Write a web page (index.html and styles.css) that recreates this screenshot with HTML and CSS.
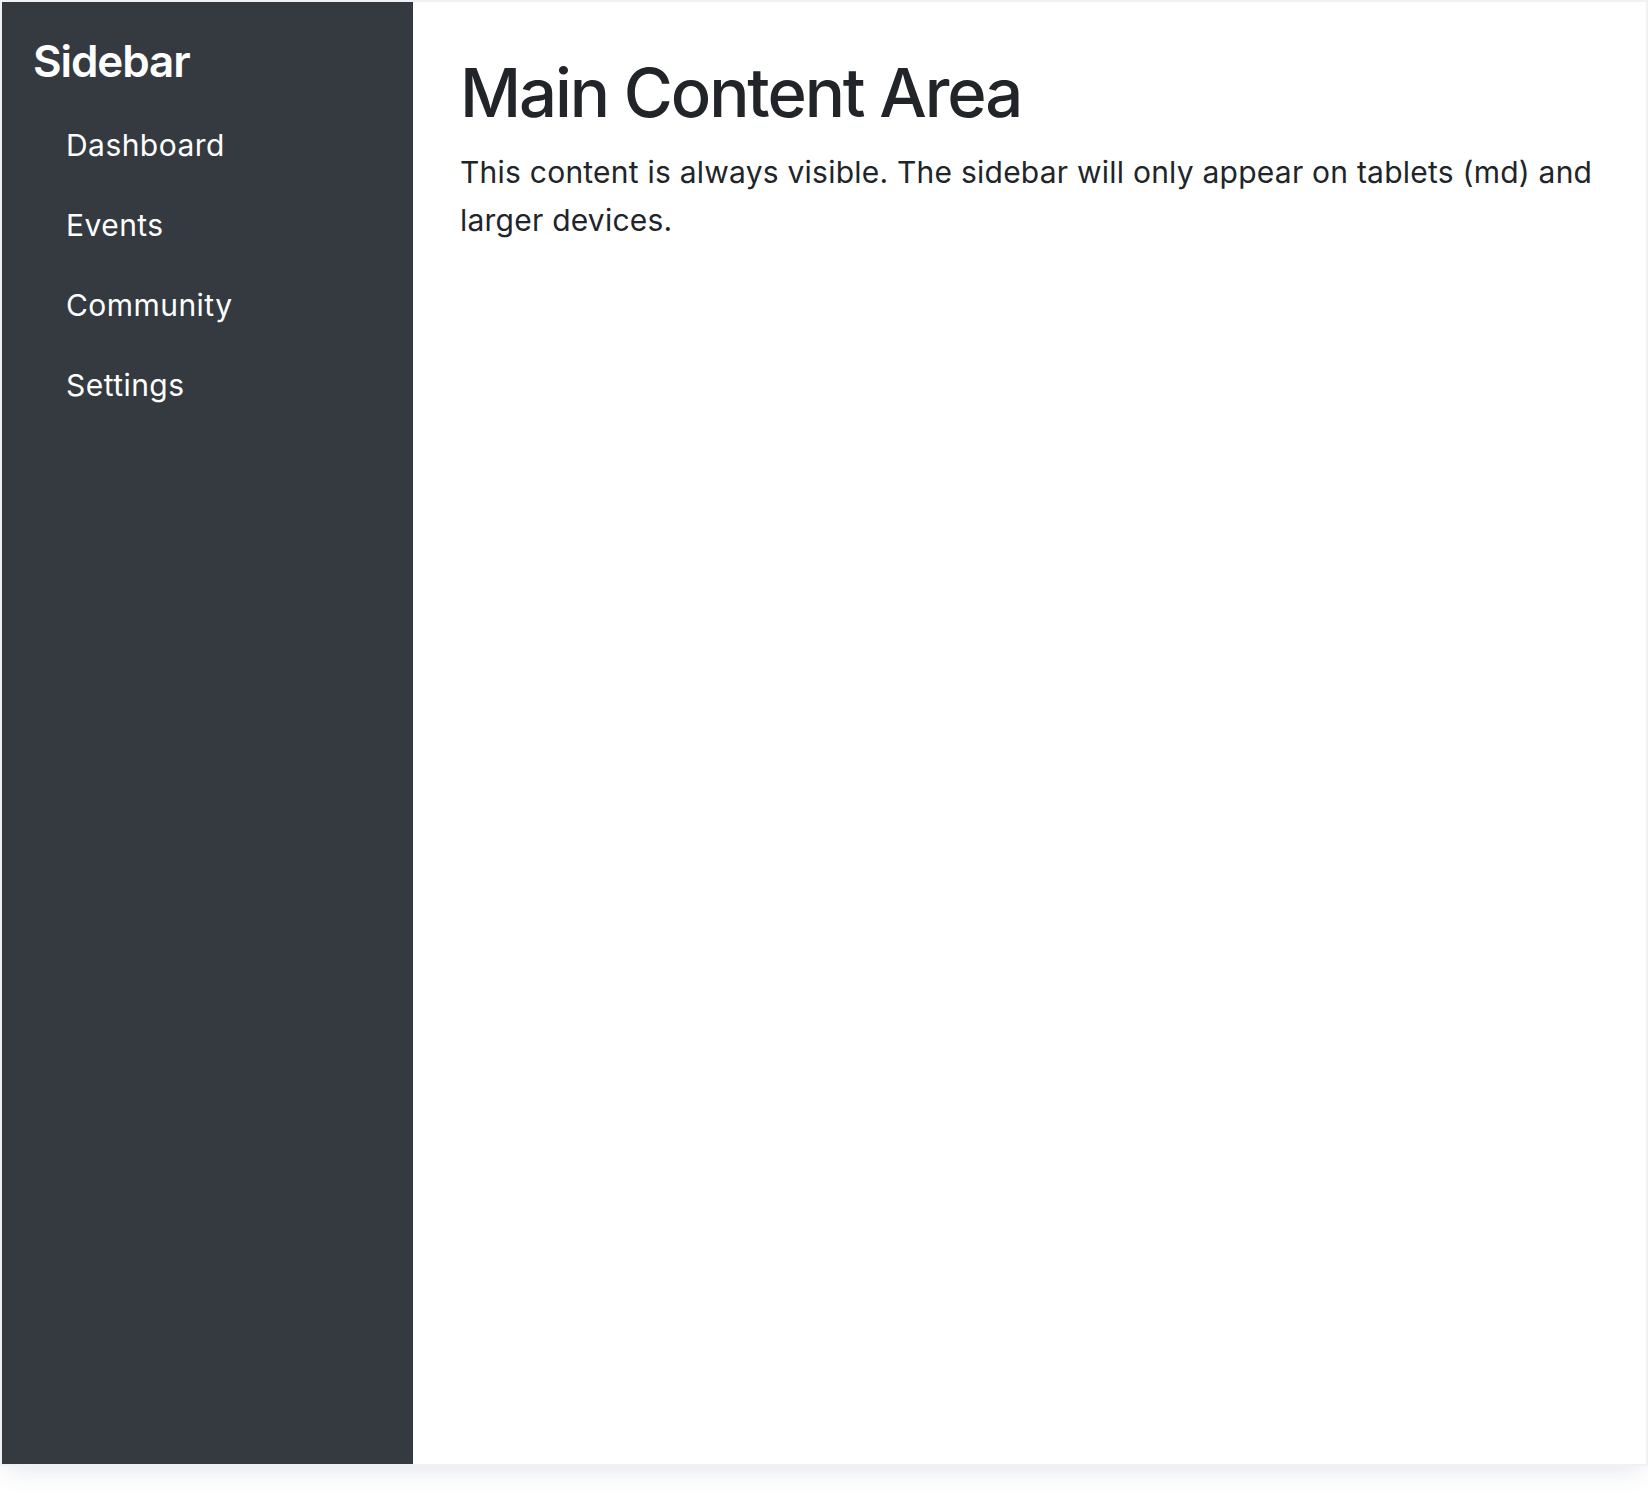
FILE: index.html
```html
<!DOCTYPE html>
<html lang="en">
<head>
<meta charset="utf-8">
<title>Sidebar Layout</title>
<link rel="stylesheet" href="styles.css">
</head>
<body>
<div class="frame">
  <aside class="sidebar">
    <h4 class="sidebar-title">Sidebar</h4>
    <nav class="nav">
      <a class="nav-link" href="#">Dashboard</a>
      <a class="nav-link" href="#">Events</a>
      <a class="nav-link" href="#">Community</a>
      <a class="nav-link" href="#">Settings</a>
    </nav>
  </aside>
  <main class="main">
    <h1 class="main-title">Main Content Area</h1>
    <p class="main-text">This content is always visible. The sidebar will only appear on tablets (md) and larger devices.</p>
  </main>
</div>
</body>
</html>
```
FILE: styles.css
```css
html, body {
  margin: 0;
  padding: 0;
}
body {
  background: #ffffff;
  min-height: 1496px;
  font-family: Inter, "Noto Sans", "Liberation Sans", sans-serif;
  color: #212529;
}
.frame {
  display: flex;
  margin: 2px 2px 0 2px;
  height: 1462px;
  background: #ffffff;
  box-shadow: 0 0 0 2px #f1f1f3, 0 12px 22px -4px rgba(60, 70, 130, 0.12);
}
.sidebar {
  width: 25%;
  flex: none;
  background: #343a40;
  padding: 33px 0 0 31px;
  box-sizing: border-box;
}
.sidebar-title {
  margin: 0 0 18px 0;
  font-size: 44px;
  line-height: 52px;
  font-weight: 600;
  letter-spacing: -1.1px;
  color: #ffffff;
}
.nav {
  display: flex;
  flex-direction: column;
}
.nav-link {
  display: block;
  padding: 17px 33px;
  font-size: 30px;
  line-height: 46px;
  letter-spacing: 0.45px;
  color: #ffffff;
  text-decoration: none;
}
.main {
  flex: 1;
  padding: 51px 48px 0 47px;
}
.main-title {
  margin: 0 0 15px 0;
  font-size: 67px;
  line-height: 80px;
  font-weight: 500;
  letter-spacing: -2.1px;
}
.main-text {
  margin: 0;
  font-size: 30px;
  line-height: 48px;
  letter-spacing: 0.23px;
}
```
